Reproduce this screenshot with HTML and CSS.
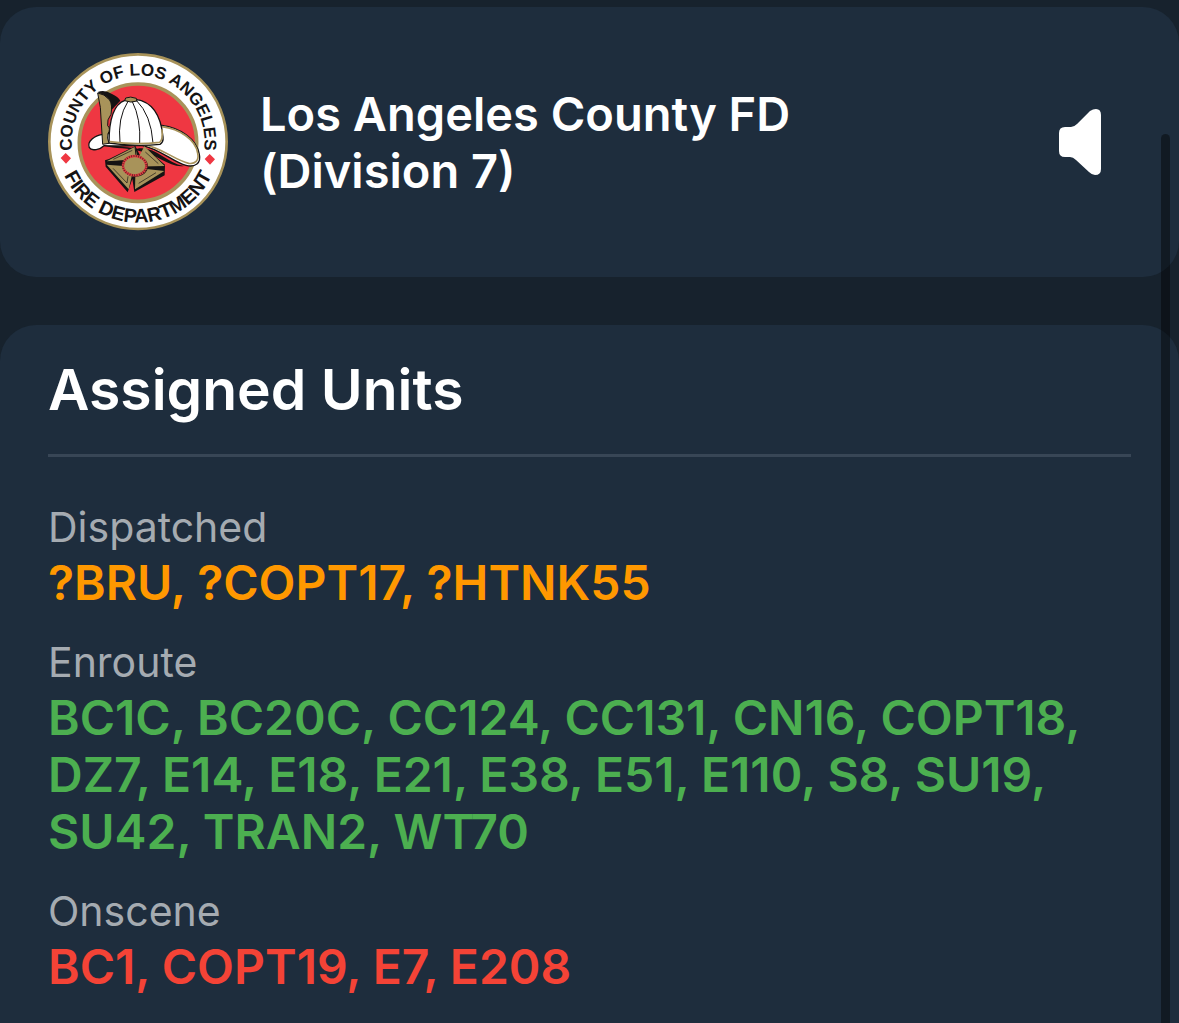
FILE: index.html
```html
<!DOCTYPE html>
<html lang="en">
<head>
  <meta charset="UTF-8" />
  <meta name="viewport" content="width=device-width, initial-scale=1.0" />
  <title>Incident Details</title>
  <link rel="stylesheet" href="styles.css">
</head>
<body>
  <header class="card agency">
    <svg class="agency-seal" viewBox="24 19 540 540" role="img" aria-label="County of Los Angeles Fire Department seal">
      <defs>
        <path id="topArc" d="M294 487 A199 199 0 1 1 295 487" />
        <path id="bottomArc" d="M50 287 A244 244 0 0 0 538 287" />
      </defs>
      <ellipse cx="294" cy="288" rx="266" ry="262" fill="#fff" stroke="#a8935a" stroke-width="8" />
      <circle cx="294" cy="291" r="176" fill="#ef3742" stroke="#a8935a" stroke-width="11" />
      <text class="seal-top"><textPath href="#topArc" startOffset="50%">COUNTY OF LOS ANGELES</textPath></text>
      <text class="seal-bottom"><textPath href="#bottomArc" startOffset="50%">FIRE DEPARTMENT</textPath></text>
      <path d="M77 322 L93 338 L78 354 L62 337Z M509 325 L525 341 L510 357 L494 340Z" fill="#ef3742" />

      <!-- helmet -->
      <path d="M173 139 Q194 131 216 145 Q234 153 241 165 L212 196 L196 160Z" fill="#151313" />
      <path d="M366 239 C418 246 470 278 478 326 C484 352 466 366 438 359 C400 350 360 309 304 299 C250 300 225 303 192 300 C181 311 155 318 148 306 C140 287 164 269 190 266Z" fill="#fff" stroke="#151313" stroke-width="4" />
      <path d="M366 243 C418 250 466 280 473 322 C478 345 465 356 446 353 C404 343 365 306 310 296" fill="none" stroke="#a8935a" stroke-width="5" />
      <path d="M192 300 C240 300 270 306 291 309 C347 300 377 352 432 361 C390 367 351 326 309 319 C265 304 225 310 192 300Z" fill="#151313" />
      <path d="M207 292 C207 229 218 176 255 164 L287 161 C337 168 363 211 369 274 Q371 289 360 296 Q286 304 207 292Z" fill="#fff" stroke="#151313" stroke-width="4" />
      <path d="M257 157 Q271 151 289 158 L291 166 Q273 173 254 165Z" fill="#a8935a" stroke="#151313" stroke-width="3" />
      <path d="M264 167 Q232 217 240 291 M277 168 Q303 219 299 295 M289 164 Q333 207 339 292" fill="none" stroke="#151313" stroke-width="3" />
      <path d="M209 288 Q287 299 359 290 Q369 283 366 251" fill="none" stroke="#a8935a" stroke-width="5" />
      <path d="M173 142 Q193 144 209 163 Q218 178 213 206 Q200 222 203 240 Q213 249 204 264 Q200 276 207 293 L188 296 L181 185Z" fill="#a8935a" stroke="#151313" stroke-width="3" />

      <!-- badge -->
      <path d="M286 301 L207 340 L195 344 L197 363 L263 440 L277 400 L283 439 L374 389 L375 357 L316 306 L301 331Z" fill="#151313" />
      <path d="M285 303 L292 330 Q263 328 250 344 L200 347Z" fill="#a8935a" />
      <path d="M313 302 L374 361 L322 363 Q321 343 298 331Z" fill="#a8935a" />
      <path d="M200 357 L250 361 Q254 379 276 388 L266 431Z" fill="#a8935a" />
      <path d="M320 370 L373 376 L285 431 L286 390 Q310 388 320 370Z" fill="#a8935a" />
      <path d="M220 341 L277 314 M316 319 L355 354 M219 368 L261 412 L264 392 M348 381 L296 413" fill="none" stroke="#151313" stroke-width="2" />
      <path d="M285 303 L288 329 M251 346 L199 350 M321 364 L373 364" fill="none" stroke="#151313" stroke-width="3" />
      <ellipse cx="286" cy="362" rx="38" ry="31" fill="#151313" />
      <ellipse cx="284" cy="360" rx="35" ry="29" fill="#a8935a" stroke="#dc3d42" stroke-width="7" />
      <ellipse cx="284" cy="360" rx="35" ry="29" fill="none" stroke="#4c1b19" stroke-width="6" stroke-dasharray="2 5" />
    </svg>
    <h1 class="agency-name">Los Angeles County FD (Division 7)</h1>
    <button class="audio-btn" type="button" aria-label="Play audio">
      <svg viewBox="0 0 72 72" aria-hidden="true">
        <path d="M6 21 H12 Q15 21 18 18 L31 5 Q34 3 37 3 Q42 3 42 9 V63 Q42 69 36 69 Q33 69 30 66 L17 54 Q14 51 11 51 H6 Q0 51 0 45 V27 Q0 21 6 21Z" fill="#fff" />
      </svg>
    </button>
  </header>

  <main class="card units">
    <h2 class="units-title">Assigned Units</h2>
    <dl class="unit-list">
      <div class="unit-group">
        <dt>Dispatched</dt>
        <dd class="dispatched">?BRU, ?COPT17, ?HTNK55</dd>
      </div>
      <div class="unit-group">
        <dt>Enroute</dt>
        <dd class="enroute">BC1C, BC20C, CC124, CC131, CN16, COPT18, DZ7, E14, E18, E21, E38, E51, E110, S8, SU19, SU42, TRAN2, WT70</dd>
      </div>
      <div class="unit-group">
        <dt>Onscene</dt>
        <dd class="onscene">BC1, COPT19, E7, E208</dd>
      </div>
    </dl>
  </main>

  <div class="scroll-thumb"></div>
</body>
</html>
```
FILE: styles.css
```css
* {
  box-sizing: border-box;
}
body {
  font-family: Inter, "Liberation Sans", sans-serif;
  background: #17222d;
  color: #fff;
  margin: 0;
  padding-top: 7px;
  min-height: 100vh;
  display: flex;
  flex-direction: column;
  gap: 48px;
}
h1, h2, dl, dd {
  margin: 0;
}
.card {
  background: #1e2d3d;
  border-radius: 36px;
}
.agency {
  display: flex;
  align-items: center;
  gap: 32px;
  padding: 45px 48px;
}
.agency-seal {
  width: 180px;
  height: 180px;
  flex-shrink: 0;
}
.seal-top,
.seal-bottom {
  font-family: "Liberation Sans", sans-serif;
  font-weight: bold;
  text-anchor: middle;
  fill: #151313;
}
.seal-top {
  font-size: 51px;
}
.seal-bottom {
  font-size: 59px;
}
.agency-name {
  flex: 0 1 560px;
  font-size: 47px;
  line-height: 57px;
  font-weight: 600;
}
.audio-btn {
  width: 72px;
  height: 72px;
  margin-left: auto;
  padding: 0;
  flex-shrink: 0;
  background: none;
  border: none;
  cursor: pointer;
}
.audio-btn svg {
  display: block;
}
.units {
  flex: 1;
  padding: 30px 48px 24px;
  border-radius: 36px 36px 0 0;
}
.units-title {
  padding-bottom: 29px;
  border-bottom: 3px solid #384656;
  font-size: 57px;
  line-height: 70px;
  font-weight: 600;
}
.unit-list {
  display: flex;
  flex-direction: column;
  gap: 24px;
  margin-top: 43px;
}
dt {
  color: #a5abb1;
  font-size: 41px;
  line-height: 54px;
}
dd {
  font-size: 48px;
  line-height: 57px;
  font-weight: 600;
}
.dispatched {
  color: #ff9800;
}
.enroute {
  color: #4caf50;
}
.onscene {
  color: #f44336;
}
.scroll-thumb {
  position: fixed;
  top: 134px;
  right: 9px;
  bottom: 0;
  width: 9px;
  border-radius: 5px 5px 0 0;
  background: rgba(0, 0, 0, 0.42);
}
```
